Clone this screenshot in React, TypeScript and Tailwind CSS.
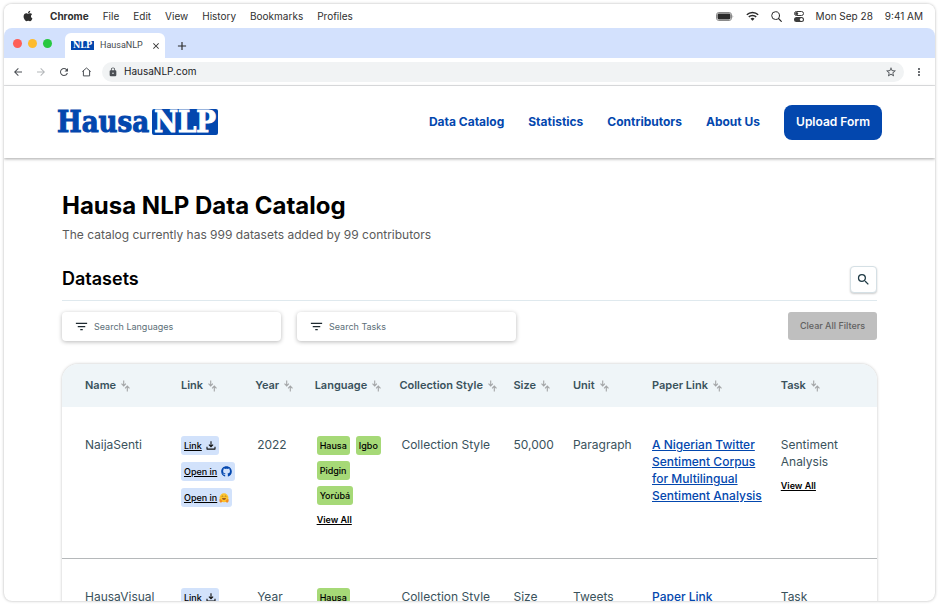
import React from "react";
import { FaApple, FaGithub } from "react-icons/fa";
import {
  MdAdd,
  MdArrowBack,
  MdArrowForward,
  MdClose,
  MdFilterList,
  MdLock,
  MdMoreVert,
  MdRefresh,
  MdSearch,
  MdStarBorder,
} from "react-icons/md";

function BatteryIcon() {
  return (
    <svg width="18" height="9" viewBox="0 0 18 9" fill="none" aria-hidden="true">
      <rect x="0.5" y="0.5" width="15" height="8" rx="2.4" stroke="#8a8a8a" />
      <rect x="1.5" y="1.5" width="13" height="6" rx="1.4" fill="#2b2b2b" />
      <path d="M16.6 3.2c.8.3.8 2.3 0 2.6z" fill="#777" />
    </svg>
  );
}

function WifiIcon() {
  return (
    <svg width="13" height="10" viewBox="0 0 13 10" fill="none" stroke="#2b2b2b" strokeWidth="1.5" aria-hidden="true">
      <path d="M0.8 3.7a8.2 8.2 0 0 1 11.4 0" />
      <path d="M2.8 5.9a5.3 5.3 0 0 1 7.4 0" />
      <path d="M6.5 9.7 4.5 7.7a2.9 2.9 0 0 1 4 0z" fill="#2b2b2b" stroke="none" />
    </svg>
  );
}

function SpotlightIcon() {
  return (
    <svg width="11" height="11" viewBox="0 0 11 11" fill="none" stroke="#2b2b2b" strokeLinecap="round" aria-hidden="true">
      <circle cx="4.6" cy="4.6" r="3.9" />
      <path d="M7.5 7.5 10.3 10.3" strokeWidth="1.2" />
    </svg>
  );
}

function ControlCenterIcon() {
  return (
    <svg width="10" height="11" viewBox="0 0 10 11" fill="none" aria-hidden="true">
      <rect x="0.5" y="0.5" width="9" height="4" rx="2" stroke="#3c3c3c" />
      <circle cx="2.7" cy="2.5" r="1.5" fill="#3c3c3c" />
      <rect x="0" y="6" width="10" height="5" rx="2.5" fill="#3c3c3c" />
      <circle cx="7.4" cy="8.5" r="1.5" fill="#fff" />
    </svg>
  );
}

function HomeIcon() {
  return (
    <svg width="9" height="10" viewBox="0 0 9 10" fill="none" stroke="#4b4f54" aria-hidden="true">
      <path d="M0.3 4.6 4.5 1l4.2 3.6M1.4 3.9v5h6.2v-5" />
    </svg>
  );
}

function SortIcon() {
  return (
    <svg width="9" height="12" viewBox="0 0 9 12" fill="none" stroke="#a3a5a7" strokeWidth="1.1" aria-hidden="true">
      <path d="M2.7 0.4v5.4M0.5 3.7l2.2 2.2 2.2-2.2" />
      <path d="M6.3 11.6V6.2M4.1 8.3l2.2-2.2 2.2 2.2" />
    </svg>
  );
}

function DownloadIcon() {
  return (
    <svg width="10" height="9" viewBox="0 0 10 9" fill="none" stroke="#111" strokeWidth="1.1" aria-hidden="true">
      <path d="M5 0.3v5.2M2.9 3.6 5 5.7l2.1-2.1" />
      <path d="M1 5.8v2.3h8V5.8" strokeLinejoin="round" />
    </svg>
  );
}

function HuggingFaceIcon() {
  return (
    <svg width="10" height="10" viewBox="0 0 18 18" aria-hidden="true">
      <circle cx="9" cy="8.6" r="8" fill="#fdc22d" />
      <path d="M5 6.2c.5-1 1.7-1 2.2 0M10.8 6.2c.5-1 1.7-1 2.2 0" fill="none" stroke="#6b4a1c" strokeWidth="1.3" />
      <path d="M5.5 9.2h7c0 4.600-7 4.600-7 0z" fill="#9a5a21" />
      <path d="M0.8 11.5c1-1.5 2.3 0 4.2 1.6 1.6 1.4 1 4-1.4 4.2-2.3 0-3.4-3-2.8-5.8zM17.2 11.5c-1-1.5-2.3 0-4.2 1.6-1.6 1.4-1 4 1.4 4.2 2.3 0 3.4-3 2.8-5.8z" fill="#f28c1f" />
    </svg>
  );
}

function MenuBar() {
  return (
    <div className="flex h-6 shrink-0 items-center justify-between bg-white pr-3 pl-[18px] text-[10px] text-[#2f2f2f]">
      <div className="flex items-center gap-[14px]">
        <FaApple className="mr-0.5 size-3" aria-hidden="true" />
        <span className="font-bold">Chrome</span>
        <span>File</span>
        <span>Edit</span>
        <span>View</span>
        <span>History</span>
        <span>Bookmarks</span>
        <span>Profiles</span>
      </div>
      <div className="flex items-center gap-3">
        <BatteryIcon />
        <WifiIcon />
        <SpotlightIcon />
        <ControlCenterIcon />
        <span>Mon Sep 28</span>
        <span>9:41 AM</span>
      </div>
    </div>
  );
}

function TabBar() {
  return (
    <div className="flex h-[30px] shrink-0 items-end rounded-t-lg bg-[#d3e1fd] pl-[9px]">
      <div className="flex h-full items-center gap-[6px]">
        <span className="size-[9px] rounded-full bg-[#fe5f57]" />
        <span className="size-[9px] rounded-full bg-[#febb2e]" />
        <span className="size-[9px] rounded-full bg-[#28c840]" />
      </div>
      <div className="ml-[13px] flex h-[25px] w-[100px] items-center rounded-t-md bg-white pr-1 pl-[6px] font-[Roboto,sans-serif] text-[9px] text-[#45494d]">
        <span className="flex h-[9px] w-[23px] items-center justify-center bg-[#0347ae] font-['DejaVu_Serif_Condensed','DejaVu_Serif',serif] text-[9px] leading-[9px] font-bold text-white">
          NLP
        </span>
        <span className="ml-[6px]">HausaNLP</span>
        <button type="button" aria-label="Close tab" className="ml-auto">
          <MdClose className="size-[10px] text-[#2b2b2b]" />
        </button>
      </div>
      <button type="button" aria-label="New tab" className="ml-[10px] flex h-[25px] items-center">
        <MdAdd className="size-[14px] text-[#2b2b2b]" />
      </button>
    </div>
  );
}

function AddressBar() {
  return (
    <div className="flex h-7 shrink-0 items-center border-b border-[#e4e5e7] bg-white pr-[10px] pl-2 text-[#4b4f54]">
      <div className="flex items-center gap-[11px]">
        <button type="button" aria-label="Back">
          <MdArrowBack className="size-3" />
        </button>
        <button type="button" aria-label="Forward">
          <MdArrowForward className="size-3 text-[#b4b7ba]" />
        </button>
        <button type="button" aria-label="Reload">
          <MdRefresh className="size-3" />
        </button>
        <button type="button" aria-label="Home" className="px-px">
          <HomeIcon />
        </button>
      </div>
      <div className="ml-[10px] flex h-5 flex-1 items-center rounded-full bg-[#f1f3f4] pr-[7px] pl-[6px]">
        <MdLock className="size-[10px]" aria-hidden="true" />
        <input
          aria-label="Address"
          defaultValue="HausaNLP.com"
          className="ml-[6px] min-w-0 flex-1 bg-transparent text-[10px] text-[#202124] outline-none"
        />
        <button type="button" aria-label="Bookmark this page">
          <MdStarBorder className="size-3" />
        </button>
      </div>
      <button type="button" aria-label="More" className="ml-[9px]">
        <MdMoreVert className="size-3" />
      </button>
    </div>
  );
}

function SiteHeader() {
  return (
    <header className="flex h-[72px] shrink-0 items-center justify-between bg-white px-[53px] text-[#0347ae] shadow-[0_1px_3px_rgba(0,0,0,0.35)]">
      <a
        href="#home"
        className="flex items-center gap-[3px] font-['DejaVu_Serif_Condensed','DejaVu_Serif',serif] text-[29px] leading-[26px] font-bold [-webkit-text-stroke:1px]"
      >
        Hausa
        <span className="flex h-[26px] items-center rounded-xs bg-[#0347ae] px-0.5 text-white">NLP</span>
      </a>
      <nav className="flex items-center gap-6 text-xs font-bold">
        <a href="#catalog">Data Catalog</a>
        <a href="#statistics">Statistics</a>
        <a href="#contributors">Contributors</a>
        <a href="#about">About Us</a>
        <a
          href="#upload"
          className="flex h-[35px] items-center rounded-lg bg-[#0347ae] px-3 font-semibold text-white"
        >
          Upload Form
        </a>
      </nav>
    </header>
  );
}

function FilterInput({ label }: { label: string }) {
  return (
    <div className="flex h-[29px] w-[219px] items-center gap-[5px] rounded bg-white px-3 shadow-[0_1px_4px_rgba(0,0,0,0.28)]">
      <MdFilterList className="size-[15px] shrink-0 text-[#1f2a30]" aria-hidden="true" />
      <input
        type="text"
        aria-label={label}
        placeholder={label}
        className="min-w-0 flex-1 bg-transparent text-[9px] outline-none placeholder:text-[#5c6f78]"
      />
    </div>
  );
}

const columns = [
  { title: "Name", width: "w-[14.6%]" },
  { title: "Link", width: "w-[9.1%]" },
  { title: "Year", width: "w-[7.3%]" },
  { title: "Language", width: "w-[10.4%]" },
  { title: "Collection Style", width: "w-[14%]" },
  { title: "Size", width: "w-[7.3%]" },
  { title: "Unit", width: "w-[9.7%]" },
  { title: "Paper Link", width: "w-[15.8%]" },
  { title: "Task", width: "w-[11.8%]" },
];

type Dataset = {
  name: string;
  year: string;
  languages: string[];
  style: string;
  size: string;
  unit: string;
  paper: string;
  task: string;
};

const datasets: Dataset[] = [
  {
    name: "NaijaSenti",
    year: "2022",
    languages: ["Hausa", "Igbo", "Pidgin", "Yorùbá"],
    style: "Collection Style",
    size: "50,000",
    unit: "Paragraph",
    paper: "A Nigerian Twitter Sentiment Corpus for Multilingual Sentiment Analysis",
    task: "Sentiment Analysis",
  },
  {
    name: "HausaVisual",
    year: "Year",
    languages: ["Hausa"],
    style: "Collection Style",
    size: "Size",
    unit: "Tweets",
    paper: "Paper Link",
    task: "Task",
  },
];

const chip = "flex h-[19px] items-center rounded-[3px] bg-[#d2e2fb] px-[3px] text-[9px] font-medium text-black";

function DatasetRow({ row }: { row: Dataset }) {
  return (
    <tr className="border-b border-[#b5b8ba] align-top leading-[17px]">
      <td className="pt-[29px] pl-[23px]">{row.name}</td>
      <td className="pt-[29px]">
        <div className="flex flex-col items-start gap-[7px]">
          <a href="#download" className={chip}>
            <span className="mr-1 underline">Link</span>
            <DownloadIcon />
          </a>
          <a href="#github" className={chip}>
            <span className="mr-1 underline">Open in</span>
            <FaGithub className="size-[11px] text-[#0347ae]" aria-hidden="true" />
          </a>
          <a href="#huggingface" className={chip}>
            <span className="mr-0.5 underline">Open in</span>
            <HuggingFaceIcon />
          </a>
        </div>
      </td>
      <td className="pt-[29px] pl-0.5">{row.year}</td>
      <td className="pt-[29px] pb-[30px] pl-0.5">
        <div className="flex max-w-[70px] flex-wrap gap-[6px] text-[9px] font-medium text-black">
          {row.languages.map((language) => (
            <span key={language} className="flex h-[19px] items-center rounded-[3px] bg-[#a6d977] px-[3px]">
              {language}
            </span>
          ))}
        </div>
        <a href="#languages" className="mt-[6px] block text-[9px] font-semibold text-black underline">
          View All
        </a>
      </td>
      <td className="pt-[29px] pl-0.5">{row.style}</td>
      <td className="pt-[29px]">{row.size}</td>
      <td className="pt-[29px]">{row.unit}</td>
      <td className="pt-[29px] pr-3">
        <a href="#paper" className="font-medium text-[#0347ae] underline">
          {row.paper}
        </a>
      </td>
      <td className="pt-[29px] pr-6">
        {row.task}
        <a href="#tasks" className="mt-[7px] block text-[9px] font-semibold text-black underline">
          View All
        </a>
      </td>
    </tr>
  );
}

function DatasetTable() {
  return (
    <div className="mt-[23px] overflow-hidden rounded-t-2xl shadow-[0_0_3px_rgba(0,0,0,0.25)]">
      <table className="w-full table-fixed border-collapse text-left text-xs text-[#3a525c]">
        <thead>
          <tr className="h-[43px] bg-[#eff5f8]">
            {columns.map((column) => (
              <th key={column.title} scope="col" className={`${column.width} font-semibold first:pl-[23px]`}>
                <button type="button" className="flex items-center gap-[5px] text-[11px] whitespace-nowrap">
                  {column.title}
                  <SortIcon />
                </button>
              </th>
            ))}
          </tr>
        </thead>
        <tbody>
          {datasets.map((row) => (
            <DatasetRow key={row.name} row={row} />
          ))}
        </tbody>
      </table>
    </div>
  );
}

export default function App() {
  return (
    <div className="h-screen bg-white p-1 font-[Inter,'Liberation_Sans',sans-serif]">
      <div className="flex h-full flex-col overflow-hidden rounded-lg bg-white shadow-[0_0_3px_rgba(0,0,0,0.3)]">
        <MenuBar />
        <TabBar />
        <AddressBar />
        <SiteHeader />
        <main className="min-h-0 flex-1 overflow-hidden px-[58px] pt-[30px]">
          <h1 className="text-2xl leading-9 font-bold text-black">Hausa NLP Data Catalog</h1>
          <p className="mt-0.5 text-xs leading-[18px] text-[#5a5a5a]">
            The catalog currently has 999 datasets added by 99 contributors
          </p>
          <div className="mt-[22px] flex items-start justify-between border-b border-[#dfe9ee] pb-[7px]">
            <h2 className="text-lg leading-[25px] font-semibold text-black">Datasets</h2>
            <button
              type="button"
              aria-label="Search datasets"
              className="flex size-[27px] items-center justify-center rounded border border-[#d5e0e5] bg-white text-[#1f3a45] shadow-[0_1px_2px_rgba(0,0,0,0.2)]"
            >
              <MdSearch className="size-[15px]" />
            </button>
          </div>
          <div className="mt-[11px] flex items-start justify-between">
            <div className="flex gap-4">
              <FilterInput label="Search Languages" />
              <FilterInput label="Search Tasks" />
            </div>
            <button type="button" className="h-7 rounded-[3px] bg-[#bfbfbf] px-3 text-[9px] font-medium text-[#616161]">
              Clear All Filters
            </button>
          </div>
          <DatasetTable />
        </main>
      </div>
    </div>
  );
}
